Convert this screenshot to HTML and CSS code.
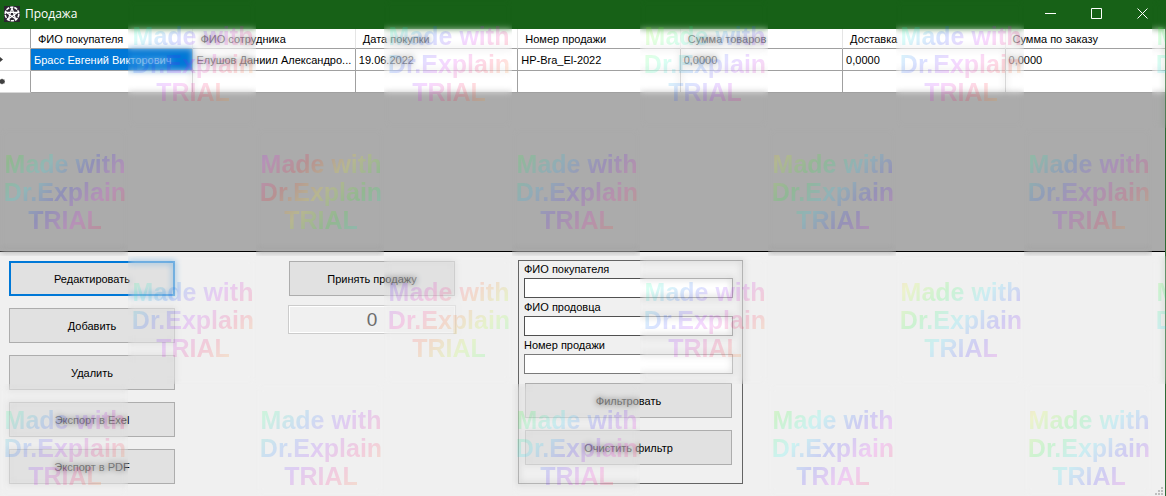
FILE: index.html
```html
<!DOCTYPE html>
<html lang="ru">
<head>
<meta charset="utf-8">
<title>Продажа</title>
<link rel="stylesheet" href="styles.css">
</head>
<body>
<div class="window">
  <header class="titlebar">
    <svg class="app-icon" width="16" height="16" viewBox="0 0 16 16" aria-hidden="true">
      <rect width="16" height="16" fill="#2b2530"/>
      <g fill="none" stroke="#fff">
        <circle cx="8" cy="8" r="6.8" stroke-width="1.6" stroke-dasharray="3.4 0.87"/>
        <path d="M8 2 L11.6 13 L2.2 6.3 H13.8 L4.4 13 Z" stroke-width="1.2"/>
      </g>
    </svg>
    <h1 class="title">Продажа</h1>
    <div class="controls">
      <button class="control" aria-label="Свернуть"><svg width="11" height="11" viewBox="0 0 11 11"><path d="M0 5.5H11"/></svg></button>
      <button class="control" aria-label="Развернуть"><svg width="11" height="11" viewBox="0 0 11 11"><path d="M.5 .5H10.5V10.5H.5Z"/></svg></button>
      <button class="control" aria-label="Закрыть"><svg width="11" height="11" viewBox="0 0 11 11"><path d="M.5 .5L10.5 10.5M10.5 .5L.5 10.5"/></svg></button>
    </div>
  </header>

  <main class="content">
    <section class="grid-area">
      <table class="grid">
        <colgroup><col class="marker-col"><col><col><col><col><col><col><col></colgroup>
        <thead>
          <tr><th></th><th>ФИО покупателя</th><th>ФИО сотрудника</th><th>Дата покупки</th><th>Номер продажи</th><th>Сумма товаров</th><th>Доставка</th><th>Сумма по заказу</th></tr>
        </thead>
        <tbody>
          <tr>
            <td class="marker"><svg width="6" height="7" viewBox="0 0 6 7"><path d="M0 1L3 3.5L0 6Z"/></svg></td>
            <td class="selected">Брасс Евгений Викторович</td><td>Елушов Даниил Александро...</td><td>19.06.2022</td><td>HP-Bra_El-2022</td><td>0,0000</td><td>0,0000</td><td>0,0000</td>
          </tr>
          <tr>
            <td class="marker"><svg width="6" height="7" viewBox="0 0 6 7"><path d="M0 1.5H1L2 .5L3 1.5H4.5V3L5 3.5L4.5 4.5V5.5H3L2 6.5L1 5.5H0Z"/></svg></td>
            <td></td><td></td><td></td><td></td><td></td><td></td><td></td>
          </tr>
        </tbody>
      </table>
    </section>

    <section class="panel">
      <div class="actions">
        <button class="button focused">Редактировать</button>
        <button class="button">Добавить</button>
        <button class="button">Удалить</button>
        <button class="button">Экспорт в Exel</button>
        <button class="button">Экспорт в PDF</button>
      </div>
      <div class="accept">
        <button class="button">Принять продажу</button>
        <input class="total" type="text" value="0" aria-label="Сумма" readonly>
      </div>
      <form class="filter">
        <label for="buyer">ФИО покупателя</label>
        <input id="buyer" class="field" type="text">
        <label for="seller">ФИО продовца</label>
        <input id="seller" class="field" type="text">
        <label for="number">Номер продажи</label>
        <input id="number" class="field light" type="text">
        <div class="filter-buttons">
          <button class="button" type="button">Фильтровать</button>
          <button class="button" type="button">Очистить фильтр</button>
        </div>
      </form>
    </section>
  </main>

  <svg class="grip" width="8" height="8" viewBox="0 0 8 8" aria-hidden="true"><path d="M6 0h2v2H6zM3 3h2v2H3zM6 3h2v2H6zM0 6h2v2H0zM3 6h2v2H3zM6 6h2v2H6z"/></svg>

  <div class="watermarks">
    <div class="row shifted">
      <div class="tile" style="--hue:108"><p>Made with<br>Dr.Explain<br>TRIAL</p></div>
      <div class="tile" style="--hue:108"><p>Made with<br>Dr.Explain<br>TRIAL</p></div>
      <div class="tile" style="--hue:38"><p>Made with<br>Dr.Explain<br>TRIAL</p></div>
      <div class="tile" style="--hue:108"><p>Made with<br>Dr.Explain<br>TRIAL</p></div>
      <div class="tile" style="--hue:68"><p>Made with<br>Dr.Explain<br>TRIAL</p></div>
    </div>
    <div class="row">
      <div class="tile" style="--hue:60"><p>Made with<br>Dr.Explain<br>TRIAL</p></div>
      <div class="tile" style="--hue:238"><p>Made with<br>Dr.Explain<br>TRIAL</p></div>
      <div class="tile" style="--hue:78"><p>Made with<br>Dr.Explain<br>TRIAL</p></div>
      <div class="tile" style="--hue:8"><p>Made with<br>Dr.Explain<br>TRIAL</p></div>
      <div class="tile" style="--hue:100"><p>Made with<br>Dr.Explain<br>TRIAL</p></div>
    </div>
    <div class="row shifted">
      <div class="tile" style="--hue:103"><p>Made with<br>Dr.Explain<br>TRIAL</p></div>
      <div class="tile" style="--hue:200"><p>Made with<br>Dr.Explain<br>TRIAL</p></div>
      <div class="tile" style="--hue:103"><p>Made with<br>Dr.Explain<br>TRIAL</p></div>
      <div class="tile" style="--hue:8"><p>Made with<br>Dr.Explain<br>TRIAL</p></div>
      <div class="tile" style="--hue:68"><p>Made with<br>Dr.Explain<br>TRIAL</p></div>
    </div>
    <div class="row">
      <div class="tile" style="--hue:98"><p>Made with<br>Dr.Explain<br>TRIAL</p></div>
      <div class="tile" style="--hue:92"><p>Made with<br>Dr.Explain<br>TRIAL</p></div>
      <div class="tile" style="--hue:68"><p>Made with<br>Dr.Explain<br>TRIAL</p></div>
      <div class="tile" style="--hue:58"><p>Made with<br>Dr.Explain<br>TRIAL</p></div>
      <div class="tile" style="--hue:8"><p>Made with<br>Dr.Explain<br>TRIAL</p></div>
    </div>
  </div>
</div>
</body>
</html>
```

FILE: styles.css
```css
* {
  box-sizing: border-box;
}

body {
  margin: 0;
  font-family: "Liberation Sans", Arial, sans-serif;
  font-size: 11px;
  line-height: 14px;
  color: #000;
}

button,
input {
  font: inherit;
  color: inherit;
  border-radius: 0;
}

.window {
  position: relative;
  display: flex;
  flex-direction: column;
  min-height: 100vh;
  overflow: hidden;
  background: #f0f0f0;
}

.titlebar {
  display: flex;
  align-items: center;
  height: 29px;
  padding: 0 1px 2px 4px;
  background: #176117;
  color: #fff;
}

.title {
  flex: 1;
  margin: 0 0 0 5px;
  font-family: "Open Sans", "Noto Sans", sans-serif;
  font-size: 12px;
  font-weight: 400;
  line-height: 16px;
}

.controls {
  display: flex;
}

.control {
  display: grid;
  place-items: center;
  width: 46px;
  height: 27px;
  padding: 0;
  border: 0;
  background: none;
}

.control svg {
  fill: none;
  stroke: #fff;
}

.content {
  flex: 1;
  display: flex;
  flex-direction: column;
  border-right: 1px solid #2d6b35;
}

.grid-area {
  flex: 1;
  overflow: hidden;
  background: #ababab;
  border-bottom: 1px solid #000;
}

.grid {
  width: calc(100% + 3px);
  table-layout: fixed;
  border-collapse: separate;
  border-spacing: 0;
  background: #fff;
}

.marker-col {
  width: 31px;
}

.grid th,
.grid td {
  overflow: hidden;
  height: 22px;
  padding: 0 3px;
  border-right: 1px solid #a0a0a0;
  border-bottom: 1px solid #a0a0a0;
  text-align: left;
  white-space: nowrap;
}

.grid th {
  height: 20px;
  padding: 0 7px;
  border-right-color: #e5e5e5;
  font-weight: 400;
}

.grid .marker {
  padding: 0;
}

.grid th:first-child {
  border-right-color: #a0a0a0;
}

.grid th:first-child,
.grid .marker {
  border-bottom-color: #d8d8d8;
}

.marker svg {
  display: block;
  fill: #404040;
}

.grid .selected {
  background: #0078d7;
  color: #fff;
}

.panel {
  display: grid;
  grid-template-columns: 279px 230px 225px;
  align-items: start;
  padding: 8px 9px 12px;
}

.actions,
.accept {
  display: flex;
  flex-direction: column;
  padding-top: 1px;
}

.actions {
  width: 166px;
  gap: 12px;
}

.accept {
  width: 168px;
  gap: 9px;
}

.button {
  height: 35px;
  padding: 0;
  border: 1px solid #adadad;
  background: #e1e1e1;
  text-align: center;
}

.button.focused {
  border: 2px solid #0078d7;
}

.accept .button {
  margin: 0 1px;
}

.total {
  width: 100%;
  height: 29px;
  padding: 0;
  border: 1px solid #ccc;
  outline: 1px solid #fff;
  outline-offset: -2px;
  background: #f0f0f0;
  color: #6d6d6d;
  font-size: 19px;
  text-align: center;
}

.filter {
  display: flex;
  flex-direction: column;
  padding: 1px 9px 18px 5px;
  border: 1px solid #646464;
}

.filter label {
  height: 16px;
  line-height: 14px;
}

.field {
  width: 100%;
  height: 20px;
  margin-bottom: 2px;
  padding: 0 2px;
  border: 1px solid #505050;
  background: #fff;
}

.field.light {
  border-color: #7a7a7a;
}

.filter-buttons {
  display: flex;
  flex-direction: column;
  gap: 12px;
  padding: 7px 1px 0;
}

.grip {
  position: absolute;
  right: 3px;
  bottom: 1px;
  fill: #bfbfbf;
}

.watermarks {
  position: absolute;
  inset: 0;
  overflow: hidden;
  pointer-events: none;
}

.row {
  display: flex;
  gap: 128px;
}

.row.shifted {
  padding-left: 128px;
}

.tile {
  position: relative;
  flex: none;
  width: 128px;
  height: 128px;
}

.tile::before {
  content: "";
  position: absolute;
  inset: -12px;
  clip-path: inset(12px);
  backdrop-filter: blur(3px);
  opacity: 0.65;
}

.tile p {
  position: relative;
  height: 128px;
  margin: 0;
  padding: 22px 0 0 2px;
  background: linear-gradient(135deg,
    hsl(var(--hue) 100% 50%),
    hsl(calc(var(--hue) + 60) 100% 50%),
    hsl(calc(var(--hue) + 120) 100% 50%),
    hsl(calc(var(--hue) + 180) 100% 50%),
    hsl(calc(var(--hue) + 240) 100% 50%),
    hsl(calc(var(--hue) + 300) 100% 50%),
    hsl(calc(var(--hue) + 360) 100% 50%));
  background-clip: text;
  color: transparent;
  font-size: 25px;
  font-weight: 700;
  line-height: 28px;
  text-align: center;
  opacity: 0.15;
}
```
